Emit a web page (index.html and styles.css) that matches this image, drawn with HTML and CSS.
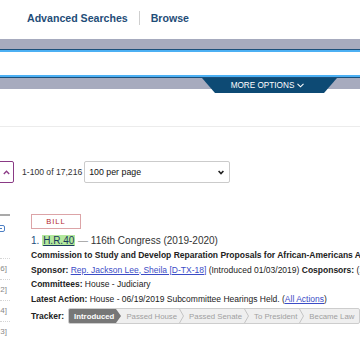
FILE: index.html
```html
<!DOCTYPE html>
<html lang="en">
<head>
  <meta charset="UTF-8" />
  <meta name="viewport" content="width=device-width, initial-scale=1.0"/>
  <title>congress search results</title>
  <link rel="stylesheet" href="styles.css">
</head>
<body>
  <header class="top-nav">
    <a href="#" class="nav-link">Advanced Searches</a>
    <span class="nav-sep"></span>
    <a href="#" class="nav-link">Browse</a>
  </header>

  <div class="search-area">
    <div class="band"></div>
    <div class="search-box">
      <input type="text" class="search-input" aria-label="search">
    </div>
    <div class="band band-bottom">
      <a href="#" class="more-tab">MORE OPTIONS
        <svg width="7" height="5" viewBox="0 0 7 5"><path d="M0.5 0.8 L3.5 3.8 L6.5 0.8" stroke="#fff" stroke-width="1.1" fill="none"/></svg>
      </a>
    </div>
  </div>

  <div class="controls">
    <button class="collapse-btn" aria-label="collapse">
      <svg width="7" height="5" viewBox="0 0 7 5"><path d="M0.8 4 L3.5 1.2 L6.2 4" stroke="#8a3a85" stroke-width="1.3" fill="none"/></svg>
    </button>
    <span class="count">1-100 of 17,216</span>
    <div class="per-page">
      <span>100 per page</span>
      <svg width="6" height="5" viewBox="0 0 6 5"><path d="M0.6 1 L3 3.6 L5.4 1" stroke="#222" stroke-width="1.6" fill="none"/></svg>
    </div>
  </div>

  <div class="results">
    <aside class="facets">
      <div class="facet-rule"></div>
      <div class="facet-toggle"><span></span></div>
      <ul class="facet-list">
        <li>6]</li>
        <li>2]</li>
        <li>4]</li>
        <li>3]</li>
      </ul>
    </aside>

    <main class="result">
      <span class="badge">BILL</span>
      <h2 class="result-title">
        <span class="num">1.</span> <a href="#" class="bill-link">H.R.40</a> <span class="dash">—</span> 116th Congress (2019-2020)
      </h2>
      <p class="bold-line">Commission to Study and Develop Reparation Proposals for African-Americans Act</p>
      <p><b>Sponsor:</b> <a href="#">Rep. Jackson Lee, Sheila [D-TX-18]</a> (Introduced 01/03/2019) <b>Cosponsors:</b> (171)</p>
      <p><b>Committees:</b> House - Judiciary</p>
      <p><b>Latest Action:</b> House - 06/19/2019 Subcommittee Hearings Held. (<a href="#">All Actions</a>)</p>
      <div class="tracker-row">
        <b>Tracker:</b>
        <ol class="tracker">
          <li class="step done">Introduced</li>
          <li class="tip"><svg width="5" height="14" viewBox="0 0 5 14"><path d="M0 0 L5 7 L0 14 Z" fill="#777"/></svg></li>
          <li class="step">Passed House</li>
          <li class="chev"><svg width="5" height="14" viewBox="0 0 5 14"><path d="M0.5 0 L4.5 7 L0.5 14" stroke="#c4c4c4" fill="none"/></svg></li>
          <li class="step">Passed Senate</li>
          <li class="chev"><svg width="5" height="14" viewBox="0 0 5 14"><path d="M0.5 0 L4.5 7 L0.5 14" stroke="#c4c4c4" fill="none"/></svg></li>
          <li class="step">To President</li>
          <li class="chev"><svg width="5" height="14" viewBox="0 0 5 14"><path d="M0.5 0 L4.5 7 L0.5 14" stroke="#c4c4c4" fill="none"/></svg></li>
          <li class="step last">Became Law</li>
        </ol>
      </div>
    </main>
  </div>
</body>
</html>
```

FILE: styles.css
```css
body {
  margin: 0;
  width: 360px;
  height: 338px;
  overflow: hidden;
  background: #fff;
  color: #333;
  font-family: "Liberation Sans", Arial, sans-serif;
}

/* top nav */
.top-nav {
  height: 39px;
  display: flex;
  align-items: center;
  padding-left: 27px;
  box-sizing: border-box;
  padding-bottom: 3px;
}

.nav-link {
  color: #1f4d78;
  font-weight: bold;
  font-size: 10.6px;
  text-decoration: none;
}

.nav-sep {
  width: 1px;
  height: 14px;
  background: #cfcfcf;
  margin: 0 11px;
}

/* search band */
.search-area {
  border-bottom: 1px solid #ececec;
  padding-bottom: 37px;
}

.band {
  height: 10px;
  background: #a7abbe;
}

.search-box {
  border-top: 1px solid #1b4f7a;
  border-bottom: 1px solid #1b4f7a;
}

.search-input {
  display: block;
  width: 100%;
  height: 27px;
  box-sizing: border-box;
  border: none;
  border-top: 2px solid #4cb0f3;
  border-bottom: 2px solid #4cb0f3;
  outline: none;
}

.band-bottom {
  height: 11px;
  display: flex;
}

.more-tab {
  margin-left: 202px;
  width: 135px;
  height: 15px;
  flex-shrink: 0;
  background: #0d4a74;
  clip-path: polygon(0 0, 100% 0, calc(100% - 13px) 100%, 13px 100%);
  color: #fff;
  font-size: 8.2px;
  text-decoration: none;
  display: flex;
  align-items: center;
  justify-content: center;
  gap: 3px;
  padding-right: 4px;
  box-sizing: border-box;
}

/* result controls */
.controls {
  display: flex;
  align-items: center;
  margin-top: 34px;
  height: 22px;
}

.collapse-btn {
  margin-left: -12px;
  width: 26px;
  height: 22px;
  border: 1px solid #8a3a85;
  border-radius: 2px;
  background: #fff;
  display: flex;
  align-items: center;
  justify-content: flex-end;
  padding: 0 3px 0 0;
}

.count {
  margin-left: 8px;
  font-size: 8.6px;
  color: #333;
}

.per-page {
  margin-left: 2px;
  width: 146px;
  height: 22px;
  box-sizing: border-box;
  border: 1px solid #cbcbcb;
  border-radius: 2px;
  display: flex;
  align-items: center;
  justify-content: space-between;
  padding: 0 5px 0 4px;
  font-size: 8.8px;
  color: #111;
}

/* results */
.results {
  display: flex;
  margin-top: 31px;
}

.facets {
  width: 10px;
  flex-shrink: 0;
  margin-right: 21px;
}

.facet-rule {
  height: 2px;
  background: #a9a9a9;
}

.facet-toggle {
  margin-top: 9px;
  height: 7px;
  overflow: hidden;
}

.facet-toggle span {
  display: block;
  margin-left: -7px;
  width: 10px;
  height: 5px;
  border: 1px solid #4d7fc4;
  border-radius: 2px;
}

.facet-toggle span::after {
  content: "";
  display: block;
  margin: 2px 0 0 4px;
  width: 4px;
  height: 1px;
  background: #4d7fc4;
}

.facet-list {
  list-style: none;
  margin: 26px 0 0;
  padding: 0;
}

.facet-list li {
  height: 20px;
  line-height: 20px;
  border-top: 1px dotted #d6d6d6;
  text-align: right;
  padding-right: 3px;
  font-size: 8px;
  color: #888;
}

.result {
  flex: 1;
  min-width: 0;
  white-space: nowrap;
  font-size: 8.5px;
  color: #222;
}

.badge {
  display: inline-block;
  width: 50px;
  height: 15px;
  line-height: 14px;
  box-sizing: border-box;
  border: 1px solid #dca4a7;
  text-align: center;
  color: #b3262e;
  font-size: 7.6px;
  letter-spacing: 1px;
}

.result-title {
  margin: 5px 0 0;
  font-size: 10px;
  font-weight: normal;
  line-height: 14px;
  color: #333;
}

.num {
  color: #1d4f7c;
}

.bill-link {
  background: #b3e89d;
  padding: 0 1px;
}

.dash {
  color: #999;
}

.result p {
  margin: 0;
  line-height: 14.5px;
}

.bold-line {
  font-weight: bold;
}

.result a {
  color: #3b4cc6;
}

.result .bill-link {
  color: #1a3a5c;
}

/* tracker */
.tracker-row {
  display: flex;
  align-items: center;
  gap: 4px;
  margin-top: 2px;
}

.tracker {
  list-style: none;
  margin: 0;
  padding: 0;
  display: flex;
  align-items: stretch;
  height: 14px;
  border: 1px solid #cdcdcd;
  border-radius: 2px;
  background: #efefef;
  font-size: 7.8px;
  color: #a0a0a0;
  overflow: hidden;
}

.step {
  display: flex;
  align-items: center;
  padding: 0 2px 0 5px;
}

.step.done {
  background: #777;
  color: #fff;
  font-weight: bold;
}

.step.last {
  padding-right: 5px;
}

.tip,
.chev {
  display: flex;
}
```
